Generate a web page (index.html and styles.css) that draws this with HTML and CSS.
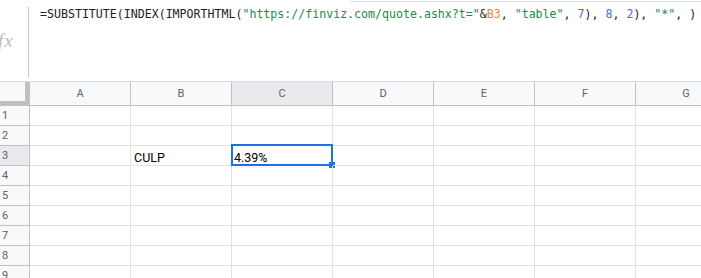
FILE: index.html
```html
<!DOCTYPE html>
<html>
<head>
<meta charset="utf-8">
<link rel="stylesheet" href="styles.css">
</head>
<body>
<div class="app">
  <div class="formula-bar">
    <div class="fx"><span class="fx-label">fx</span></div>
    <div class="formula">=SUBSTITUTE(INDEX(IMPORTHTML(<span class="tk-s">"https://finviz.com/quote.ashx?t="</span>&amp;<span class="tk-r">B3</span>, <span class="tk-s">"table"</span>, <span class="tk-n">7</span>), <span class="tk-n">8</span>, <span class="tk-n">2</span>), <span class="tk-s">"*"</span>, )</div>
    <div class="popup-edge"></div>
  </div>
  <div class="sheet">
    <div class="corner"></div>
    <div class="colh">A</div>
    <div class="colh">B</div>
    <div class="colh sel">C</div>
    <div class="colh">D</div>
    <div class="colh">E</div>
    <div class="colh">F</div>
    <div class="colh">G</div>

    <div class="rowh">1</div><div class="cell"></div><div class="cell"></div><div class="cell"></div><div class="cell"></div><div class="cell"></div><div class="cell"></div><div class="cell"></div>
    <div class="rowh">2</div><div class="cell"></div><div class="cell"></div><div class="cell"></div><div class="cell"></div><div class="cell"></div><div class="cell"></div><div class="cell"></div>
    <div class="rowh sel">3</div><div class="cell"></div><div class="cell">CULP</div><div class="cell active">4.39%<div class="selection"><div class="handle"></div></div></div><div class="cell"></div><div class="cell"></div><div class="cell"></div><div class="cell"></div>
    <div class="rowh">4</div><div class="cell"></div><div class="cell"></div><div class="cell"></div><div class="cell"></div><div class="cell"></div><div class="cell"></div><div class="cell"></div>
    <div class="rowh">5</div><div class="cell"></div><div class="cell"></div><div class="cell"></div><div class="cell"></div><div class="cell"></div><div class="cell"></div><div class="cell"></div>
    <div class="rowh">6</div><div class="cell"></div><div class="cell"></div><div class="cell"></div><div class="cell"></div><div class="cell"></div><div class="cell"></div><div class="cell"></div>
    <div class="rowh">7</div><div class="cell"></div><div class="cell"></div><div class="cell"></div><div class="cell"></div><div class="cell"></div><div class="cell"></div><div class="cell"></div>
    <div class="rowh">8</div><div class="cell"></div><div class="cell"></div><div class="cell"></div><div class="cell"></div><div class="cell"></div><div class="cell"></div><div class="cell"></div>
    <div class="rowh">9</div><div class="cell"></div><div class="cell"></div><div class="cell"></div><div class="cell"></div><div class="cell"></div><div class="cell"></div><div class="cell"></div>
  </div>
</div>
</body>
</html>
```

FILE: styles.css
```css
html, body {
  margin: 0;
  padding: 0;
  background: #ffffff;
}

.app {
  width: 701px;
  height: 278px;
  overflow: hidden;
  position: relative;
}

.formula-bar {
  height: 81px;
  display: flex;
  position: relative;
}

.fx {
  width: 28px;
  height: 70px;
  margin-top: 7px;
  border-right: 1px solid #c8c8c8;
  position: relative;
  overflow: hidden;
}

.fx-label {
  position: absolute;
  left: -2px;
  top: 24px;
  font-family: "Liberation Serif", serif;
  font-style: italic;
  font-size: 19px;
  line-height: 20px;
  color: #bdbdbd;
  letter-spacing: 1px;
}

.formula {
  padding-left: 11px;
  padding-top: 7px;
  font-family: "DejaVu Sans Mono", monospace;
  font-size: 11.6px;
  line-height: 14px;
  white-space: pre;
  color: #222222;
}

.tk-s { color: #1e8a44; }
.tk-r { color: #f5813f; }
.tk-n { color: #4c6bd6; }

.popup-edge {
  position: absolute;
  left: 350px;
  right: 0;
  top: 1px;
  height: 1px;
  background: #e0e0e0;
}

.sheet {
  display: grid;
  grid-template-columns: 30px repeat(7, 101px);
  grid-template-rows: 24px repeat(9, 20px);
  border-top: 1px solid #dadce0;
  font-family: Roboto, "Liberation Sans", sans-serif;
}

.corner {
  background: #f8f9fa;
  border-right: 5px solid #c0c0c0;
  border-bottom: 5px solid #c0c0c0;
  box-sizing: border-box;
}

.colh {
  background: #f8f9fa;
  border-right: 1px solid #c0c0c0;
  border-bottom: 1px solid #c0c0c0;
  box-sizing: border-box;
  display: flex;
  align-items: center;
  justify-content: center;
  font-size: 11px;
  color: #5f6368;
}

.rowh {
  background: #f8f9fa;
  border-right: 1px solid #c0c0c0;
  border-bottom: 1px solid #c0c0c0;
  box-sizing: border-box;
  display: flex;
  align-items: center;
  padding-left: 2px;
  font-size: 11px;
  color: #5f6368;
}

.colh.sel, .rowh.sel {
  background: #e8eaed;
}

.cell {
  border-right: 1px solid #e2e2e2;
  border-bottom: 1px solid #e2e2e2;
  box-sizing: border-box;
  display: flex;
  align-items: flex-end;
  padding-left: 3px;
  font-size: 12.5px;
  line-height: 15px;
  color: #000000;
  position: relative;
}

.cell.active {
  padding-left: 2px;
}

.selection {
  position: absolute;
  left: -1px;
  top: -2px;
  width: 102px;
  height: 22px;
  border: 2px solid #1a73e8;
  box-sizing: border-box;
}

.handle {
  position: absolute;
  left: 96px;
  top: 16px;
  width: 6px;
  height: 6px;
  background: #1a73e8;
}
```
